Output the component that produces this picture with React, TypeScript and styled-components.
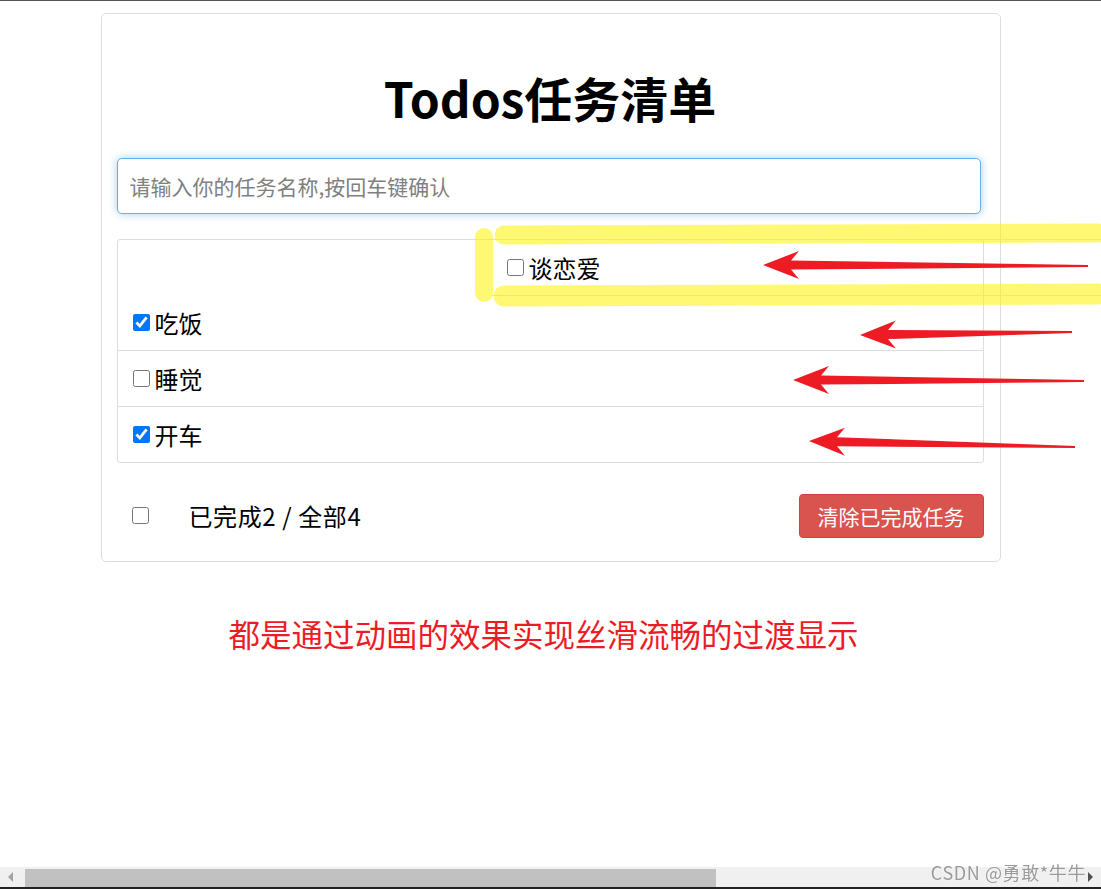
import styled, { createGlobalStyle } from "styled-components";

const GlobalStyle = createGlobalStyle`
  html, body {
    margin: 0;
    padding: 0;
    overflow: hidden;
    background: #fff;
  }
  body {
    font-family: "Noto Sans CJK SC", "Noto Sans", sans-serif;
    color: #000;
  }
`;

type Todo = { id: number; title: string; done: boolean; entering?: boolean };

const todos: Todo[] = [
  { id: 4, title: "谈恋爱", done: false, entering: true },
  { id: 1, title: "吃饭", done: true },
  { id: 2, title: "睡觉", done: false },
  { id: 3, title: "开车", done: true },
];

// tapered arrow pointing left: tip -> tail
const arrowPoints = (tx: number, ty: number, ax: number, ay: number) => {
  const headLen = 32;
  const headHalf = 14;
  const shaft = 4.5;
  const dy = (ay - ty) / (ax - tx);
  const bx = tx + headLen;
  const by = ty + dy * headLen;
  return [
    [tx, ty],
    [bx + 4, by - headHalf],
    [bx - 4, by - shaft],
    [ax, ay - 1],
    [ax, ay + 1],
    [bx - 4, by + shaft],
    [bx + 4, by + headHalf],
  ]
    .map((p) => p.join(","))
    .join(" ");
};

const arrows = [
  [763, 265, 1088, 266],
  [860, 335, 1072, 332],
  [793, 380, 1084, 381],
  [809, 441, 1075, 447],
];

const App = () => {
  const doneCount = todos.filter((t) => t.done).length;
  return (
    <>
      <GlobalStyle />
      <Page>
        <Card>
          <Title>Todos任务清单</Title>
          <TaskInput placeholder="请输入你的任务名称,按回车键确认" autoFocus />
          <List>
            {todos.map((t) => (
              <Item key={t.id} $entering={t.entering}>
                <Check type="checkbox" defaultChecked={t.done} />
                <span>{t.title}</span>
              </Item>
            ))}
          </List>
          <Footer>
            <FooterLeft>
              <Check type="checkbox" />
              <Count>
                已完成{doneCount} / 全部{todos.length}
              </Count>
            </FooterLeft>
            <ClearButton>清除已完成任务</ClearButton>
          </Footer>
        </Card>
        <Note>都是通过动画的效果实现丝滑流畅的过渡显示</Note>
      </Page>

      <Markup width="1101" height="889" viewBox="0 0 1101 889">
        <g opacity="0.55" stroke="#fff200" strokeLinecap="round" fill="none">
          <path d="M504 235 L1098 233" strokeWidth="19" />
          <path d="M504 296 L1098 294" strokeWidth="21" />
          <path d="M484 237 L484 293" strokeWidth="18" />
        </g>
        {arrows.map(([tx, ty, ax, ay], i) => (
          <polygon key={i} points={arrowPoints(tx, ty, ax, ay)} fill="#ed1c24" />
        ))}
      </Markup>

      <ScrollBar>
        <ScrollArrow $side="left" />
        <Thumb />
        <ScrollArrow $side="right" />
      </ScrollBar>
      <Watermark>CSDN @勇敢*牛牛</Watermark>
    </>
  );
};

export default App;

const Page = styled.div`
  border-top: 1px solid #555;
  min-height: 888px;
  padding-top: 12px;
  box-sizing: border-box;
`;

const Card = styled.div`
  width: 900px;
  margin: 0 auto;
  box-sizing: border-box;
  border: 1px solid #ddd;
  border-radius: 5px;
  padding: 0 16px 23px 15px;
`;

const Title = styled.h1`
  margin: 51px 0 29px;
  font-size: 48px;
  line-height: 64px;
  font-weight: 700;
  text-align: center;
`;

const TaskInput = styled.input`
  display: block;
  width: 864px;
  height: 56px;
  box-sizing: border-box;
  padding: 0 12px;
  font-family: inherit;
  font-size: 21px;
  border: 1px solid #66afe9;
  border-radius: 5px;
  outline: none;
  box-shadow: 0 0 8px rgba(102, 175, 233, 0.6);
  margin-bottom: 25px;
  &::placeholder {
    color: #808080;
  }
`;

const List = styled.ul`
  margin: 0;
  padding: 0;
  list-style: none;
  border: 1px solid #ddd;
  border-radius: 3px;
`;

const Item = styled.li<{ $entering?: boolean }>`
  display: flex;
  align-items: center;
  height: 55.5px;
  box-sizing: border-box;
  padding: 0 15px;
  font-size: 24px;
  border-bottom: 1px solid #ddd;
  &:last-child {
    border-bottom: none;
    height: 55px;
  }
  ${(p) =>
    p.$entering &&
    `
    transform: translateX(374px);
    border-top: 1px solid #ddd;
    margin-top: -1px;
    height: 56.5px;
  `}
`;

const Check = styled.input`
  width: 17px;
  height: 17px;
  margin: 0 5px 0 0;
`;

const Footer = styled.div`
  display: flex;
  align-items: center;
  justify-content: space-between;
  margin-top: 31px;
  height: 44px;
  padding-left: 15px;
`;

const FooterLeft = styled.div`
  display: flex;
  align-items: center;
`;

const Count = styled.span`
  margin-left: 35px;
  font-size: 24px;
  letter-spacing: 0.6px;
`;

const ClearButton = styled.button`
  height: 44px;
  width: 185px;
  box-sizing: border-box;
  background: #d9534f;
  border: 1px solid #d43f3a;
  border-radius: 4px;
  color: #fff;
  font-family: inherit;
  font-size: 21px;
  padding: 0;
`;

const Note = styled.div`
  margin-top: 51px;
  text-align: center;
  color: #ed1c24;
  font-size: 31.5px;
  line-height: 40px;
  padding-right: 14px;
`;

const Markup = styled.svg`
  position: fixed;
  left: 0;
  top: 0;
  pointer-events: none;
`;

const ScrollBar = styled.div`
  position: fixed;
  left: 0;
  right: 0;
  bottom: 0;
  height: 22px;
  background: #f0f0f0;
  border-bottom: 2px solid #222;
  display: flex;
  align-items: center;
  padding: 0 8px;
  box-sizing: border-box;
`;

const ScrollArrow = styled.span<{ $side: "left" | "right" }>`
  width: 0;
  height: 0;
  border-top: 5px solid transparent;
  border-bottom: 5px solid transparent;
  ${(p) =>
    p.$side === "left"
      ? "border-right: 5px solid #a3a3a3; margin-right: 12px;"
      : "border-left: 5px solid #505050; margin-left: auto;"}
`;

const Thumb = styled.div`
  width: 691px;
  height: 18px;
  margin-top: 2px;
  background: #c1c1c1;
`;

const Watermark = styled.div`
  position: fixed;
  right: 15px;
  bottom: 4px;
  font-family: "Noto Sans CJK SC", sans-serif;
  font-size: 18px;
  letter-spacing: 0.6px;
  color: #9a9a9a;
  text-shadow: 0 0 2px #fff;
`;
